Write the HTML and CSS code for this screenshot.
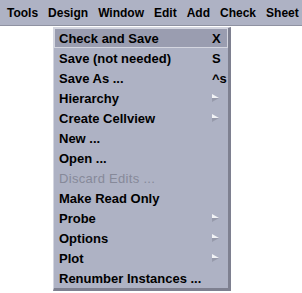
FILE: index.html
```html
<!DOCTYPE html>
<html lang="en">
<head>
    <meta charset="UTF-8">
    <title>Design Menu</title>
    <link rel="stylesheet" href="styles.css">
</head>
<body>

    <div class="menubar">
        <span class="top-item">Tools</span>
        <span class="top-item">Design</span>
        <span class="top-item">Window</span>
        <span class="top-item">Edit</span>
        <span class="top-item">Add</span>
        <span class="top-item">Check</span>
        <span class="top-item">Sheet</span>
    </div>

    <div class="menu">
        <div class="item active"><span>Check and Save</span><span class="key">X</span></div>
        <div class="item"><span>Save (not needed)</span><span class="key">S</span></div>
        <div class="item"><span>Save As ...</span><span class="key">^s</span></div>
        <div class="item"><span>Hierarchy</span><svg class="arrow" viewBox="0 0 8 8"><polygon points="0,0 7,4 0,4" fill="#f2f3f6"/><polygon points="0,4 7,4 0,8" fill="#979aab"/></svg></div>
        <div class="item"><span>Create Cellview</span><svg class="arrow" viewBox="0 0 8 8"><polygon points="0,0 7,4 0,4" fill="#f2f3f6"/><polygon points="0,4 7,4 0,8" fill="#979aab"/></svg></div>
        <div class="item"><span>New ...</span></div>
        <div class="item"><span>Open ...</span></div>
        <div class="item disabled"><span>Discard Edits ...</span></div>
        <div class="item"><span>Make Read Only</span></div>
        <div class="item"><span>Probe</span><svg class="arrow" viewBox="0 0 8 8"><polygon points="0,0 7,4 0,4" fill="#f2f3f6"/><polygon points="0,4 7,4 0,8" fill="#979aab"/></svg></div>
        <div class="item"><span>Options</span><svg class="arrow" viewBox="0 0 8 8"><polygon points="0,0 7,4 0,4" fill="#f2f3f6"/><polygon points="0,4 7,4 0,8" fill="#979aab"/></svg></div>
        <div class="item"><span>Plot</span><svg class="arrow" viewBox="0 0 8 8"><polygon points="0,0 7,4 0,4" fill="#f2f3f6"/><polygon points="0,4 7,4 0,8" fill="#979aab"/></svg></div>
        <div class="item"><span>Renumber Instances ...</span></div>
    </div>

</body>
</html>
```

FILE: styles.css
```css
body {
    margin: 0;
    background-color: #fff;
    font-family: "Liberation Sans", Arial, sans-serif;
    font-weight: bold;
    font-size: 13px;
    color: #000;
}
.menubar {
    display: flex;
    gap: 10px;
    height: 25px;
    align-items: center;
    padding-left: 7px;
    font-size: 12px;
    background-color: #aeb2c4;
    border-bottom: 1px solid #8f92a2;
}
.menu {
    width: 174px;
    margin-left: 53px;
    margin-top: 1px;
    background-color: #aeb2c4;
    border-top: 1px solid #d4d6e0;
    border-left: 1px solid #d4d6e0;
    border-right: 3px solid #7e8090;
    border-bottom: 3px solid #7e8090;
}
.item {
    display: flex;
    justify-content: space-between;
    align-items: center;
    height: 20px;
    padding: 0 6px 0 5px;
    box-sizing: border-box;
}
.item.active {
    background-color: #9a9db0;
    border: 1px solid #d4d6e0;
    padding: 0 5px 0 4px;
}
.item.disabled {
    color: #868999;
    font-weight: normal;
    letter-spacing: 0.3px;
}
.key {
    width: 10px;
    text-align: left;
}
.arrow {
    width: 8px;
    height: 8px;
    margin-right: 2px;
}
```
